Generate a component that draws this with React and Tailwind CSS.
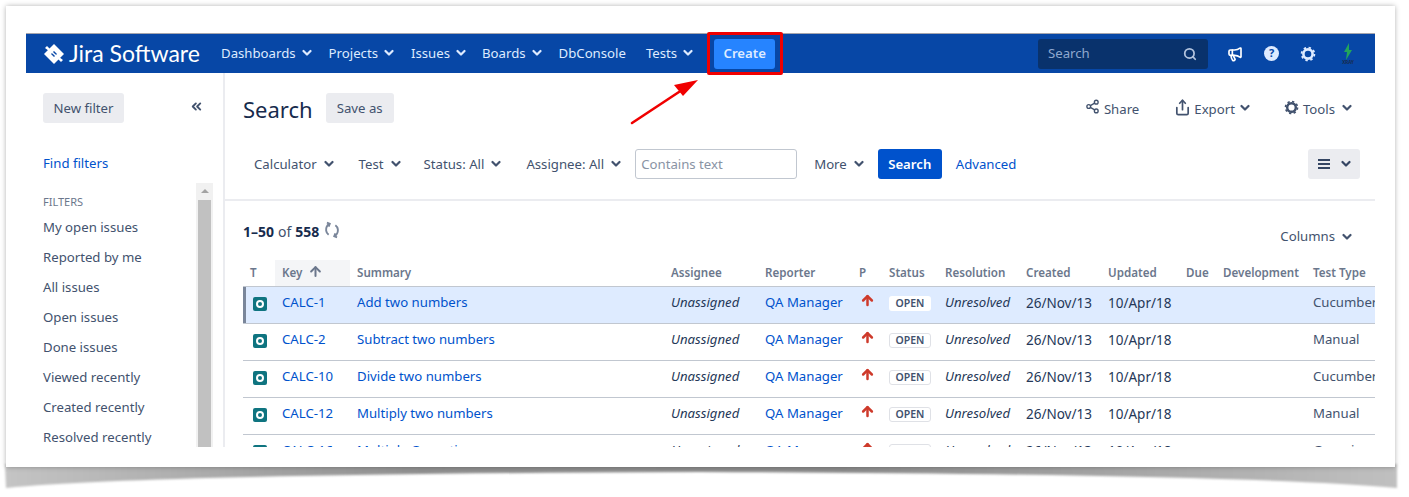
import { Search, Megaphone, Share2, Share, ArrowUp, ChevronsLeft } from 'lucide-react'

const font = { fontFamily: '"Noto Sans", sans-serif' }

const rowGrid = 'grid grid-cols-[32px_75px_314px_94px_94px_30px_56px_81px_82px_78px_37px_90px_69px]'

const issues = [
  { key: 'CALC-1', summary: 'Add two numbers', type: 'Cucumber', selected: true },
  { key: 'CALC-2', summary: 'Subtract two numbers', type: 'Manual' },
  { key: 'CALC-10', summary: 'Divide two numbers', type: 'Cucumber' },
  { key: 'CALC-12', summary: 'Multiply two numbers', type: 'Manual' },
  { key: 'CALC-16', summary: 'Multiple Operations', type: 'Generic' },
]

const filters = ['My open issues', 'Reported by me', 'All issues', 'Open issues', 'Done issues', 'Viewed recently', 'Created recently', 'Resolved recently', 'Updated recently']

const headers = ['T', 'Key', 'Summary', 'Assignee', 'Reporter', 'P', 'Status', 'Resolution', 'Created', 'Updated', 'Due', 'Development', 'Test Type']

function Chevron({ className = 'text-[#42526e]' }) {
  return (
    <svg className={`h-[8px] w-[10px] shrink-0 ${className}`} viewBox="0 0 10 8" fill="none" stroke="currentColor" strokeWidth="2.2" strokeLinecap="round" strokeLinejoin="round">
      <path d="M1.5 2l3.5 3.5L8.5 2" />
    </svg>
  )
}

function NavItem({ label, className = '', chevron = true }) {
  return (
    <div className={`flex items-center gap-[6px] whitespace-nowrap text-[#deebff] ${className}`}>
      <span>{label}</span>
      {chevron && <Chevron className="text-[#deebff]" />}
    </div>
  )
}

function FilterItem({ label, className = '' }) {
  return (
    <div className={`flex items-center gap-[7px] whitespace-nowrap text-[#42526e] ${className}`}>
      <span className="pt-[2px]">{label}</span>
      <Chevron />
    </div>
  )
}

function Gear({ className }) {
  return (
    <svg className={className} viewBox="0 0 16 16" fill="none" stroke="currentColor">
      <circle cx="8" cy="8" r="4.6" strokeWidth="2.6" />
      <circle cx="8" cy="8" r="6.4" strokeWidth="1.8" strokeDasharray="2.4 2.6" />
    </svg>
  )
}

function IssueIcon() {
  return (
    <div className="mt-[2px] flex h-[14px] w-[14px] items-center justify-center rounded-[2px] bg-[#0f7480]">
      <div className="h-[8px] w-[8px] rounded-full border-2 border-white" />
    </div>
  )
}

function IssueRow({ issue }) {
  const cell = 'pl-[7px] pt-[6px] whitespace-nowrap overflow-hidden'
  return (
    <div className={`${rowGrid} h-[37px] border-b border-[#c1c7d0] text-[13.2px] ${issue.selected ? 'bg-[#deebff]' : ''}`}>
      <div className={`pl-[10px] pt-[8px] ${issue.selected ? 'border-l-[3px] border-[#7a869a] !pl-[7px]' : ''}`}><IssueIcon /></div>
      <div className={`${cell} text-[#0052cc]`}>{issue.key}</div>
      <div className={`${cell} text-[#0052cc]`}>{issue.summary}</div>
      <div className={`${cell} italic text-[#253858]`}>Unassigned</div>
      <div className={`${cell} text-[#0052cc]`}>QA Manager</div>
      <div className="pl-[8px] pt-[6px]">
        <ArrowUp className="h-[15px] w-[15px] text-[#ce3a2b]" strokeWidth={4} />
      </div>
      <div className="pl-[7px] pt-[9px]">
        <div className={`flex h-[15px] w-[42px] items-center justify-center rounded-[3px] text-[10.5px] font-semibold text-[#42526e] ${issue.selected ? 'bg-white' : 'border border-[#dfe1e6]'}`}>OPEN</div>
      </div>
      <div className={`${cell} italic text-[#253858]`}>Unresolved</div>
      <div className={`${cell} text-[13.5px] text-[#253858]`}>26/Nov/13</div>
      <div className={`${cell} text-[13.5px] text-[#253858]`}>10/Apr/18</div>
      <div />
      <div />
      <div className={`${cell} text-[#42526e]`}>{issue.type}</div>
    </div>
  )
}

export default function App() {
  return (
    <div className="relative h-[497px] w-[1409px] overflow-hidden bg-white pl-[6px] pt-[6px] text-[13.2px]" style={font}>
      {/* Paper shadow under the card */}
      <svg className="absolute left-0 top-0 h-[497px] w-[1409px]" viewBox="0 0 1409 497">
        <defs>
          <linearGradient id="paper" x1="0" x2="1" y1="0" y2="0">
            <stop offset="0" stopColor="#c4c4c4" />
            <stop offset="0.3" stopColor="#909090" />
            <stop offset="0.6" stopColor="#8c8c8c" />
            <stop offset="1" stopColor="#c0c0c0" />
          </linearGradient>
          <filter id="soft"><feGaussianBlur stdDeviation="1.2" /></filter>
        </defs>
        <path d="M5 464H1397V488Q1250 474 700 472Q150 474 6 488Z" fill="url(#paper)" filter="url(#soft)" />
      </svg>

      {/* Card */}
      <div className="relative h-[461px] w-[1389px] bg-white px-[20px] pt-[27px] shadow-[0_0_5px_rgba(0,0,0,0.3)]">
        <div className="h-[414px] w-[1349px] overflow-hidden">
          {/* Header */}
          <div className="flex h-[40px] items-center border-t border-[#a5a5ad] bg-[#0747a6] pl-[18px] pr-[18px]">
            <svg className="h-[20px] w-[20px]" viewBox="0 0 20 20">
              <path d="M10 0l10 10-10 10L0 10z" fill="#fff" />
              <path d="M10 7l3 3-3 3-3-3z" fill="#0747a6" />
              <path d="M3 2l8 8-2 0-8-6zM17 18l-8-8 2 0 8 6z" fill="#fff" />
            </svg>
            <span className="ml-[5px] w-[152px] whitespace-nowrap text-[23px] text-white" style={{ fontFamily: 'Lato, sans-serif' }}>Jira Software</span>
            <NavItem label="Dashboards" />
            <NavItem label="Projects" className="ml-[17px]" />
            <NavItem label="Issues" className="ml-[17px]" />
            <NavItem label="Boards" className="ml-[16px]" />
            <NavItem label="DbConsole" chevron={false} className="ml-[17px]" />
            <NavItem label="Tests" className="ml-[20px]" />
            <button className="ml-[21px] h-[30px] w-[61px] rounded-[3px] bg-[#2684ff] font-semibold text-[#deebff]">Create</button>
            <div className="ml-auto flex h-[30px] w-[170px] items-center justify-between rounded-[3px] bg-[#09326c] pl-[10px] pr-[11px] text-[#8fa8cf]">
              <span>Search</span>
              <Search className="h-[14px] w-[14px] text-[#b3c4de]" strokeWidth={3} />
            </div>
            <Megaphone className="ml-[19px] h-[16px] w-[16px] text-white" strokeWidth={2.5} />
            <div className="ml-[21px] flex h-[15px] w-[15px] items-center justify-center rounded-full bg-[#deebff] text-[11px] font-bold text-[#0747a6]">?</div>
            <Gear className="ml-[21px] h-[16px] w-[16px] text-[#deebff]" />
            <div className="ml-[23px] flex w-[18px] flex-col items-center">
              <svg className="h-[17px] w-[10px]" viewBox="0 0 10 17"><path d="M6 0L1 9h3l-1 8 6-10H6z" fill="#22a55b" /></svg>
              <span className="text-[4.5px] font-bold leading-[5px] text-[#172b4d]">XRAY</span>
            </div>
          </div>

          <div className="flex h-[374px]">
            {/* Sidebar */}
            <div className="flex w-[199px] shrink-0 flex-col border-r-2 border-[#ebecf0]">
              <div className="flex items-center pl-[17px] pr-[19px] pt-[20px]">
                <button className="h-[30px] w-[81px] rounded-[3px] bg-[#ebecf0] pt-[1px] text-[#42526e]">New filter</button>
                <ChevronsLeft className="-mt-[3px] ml-auto h-[15px] w-[15px] text-[#42526e]" strokeWidth={3} />
              </div>
              <div className="mt-[31px] pl-[17px] text-[#0052cc]">Find filters</div>
              <div className="mt-[9px] flex min-h-0 flex-1 overflow-hidden pl-[17px]">
                <div className="w-[153px] pt-[11px]">
                  <div className="h-[19px] text-[11px] leading-[15px] text-[#6b778c]">FILTERS</div>
                  {filters.map((name) => (
                    <div key={name} className="flex h-[30px] items-center whitespace-nowrap text-[#42526e]">{name}</div>
                  ))}
                </div>
                <div className="flex w-[17px] flex-col items-center bg-[#f1f1f1]">
                  <div className="flex h-[17px] items-center">
                    <div className="h-0 w-0 border-x-[4px] border-b-[4px] border-x-transparent border-b-[#a3a3a3]" />
                  </div>
                  <div className="w-[13px] flex-1 bg-[#c1c1c1]" />
                </div>
              </div>
            </div>

            {/* Main */}
            <div className="min-w-0 flex-1">
              <div className="flex h-[128px] flex-col border-b-2 border-[#ebecf0]">
                <div className="flex items-center pl-[18px] pt-[20px]">
                  <h1 className="h-[30px] text-[22px] leading-[32px] text-[#172b4d]">Search</h1>
                  <button className="ml-[13px] h-[30px] w-[68px] rounded-[3px] bg-[#ebecf0] pt-[1px] text-[#42526e]">Save as</button>
                  <div className="ml-auto flex items-center pr-[23px] text-[#42526e]">
                    <Share2 className="-mt-[2px] h-[15px] w-[15px]" strokeWidth={2.2} />
                    <span className="ml-[4px] pt-[3px]">Share</span>
                    <Share className="-mt-[1px] ml-[35px] h-[17px] w-[17px]" strokeWidth={2.4} />
                    <span className="ml-[3px] pt-[3px]">Export</span>
                    <Chevron className="ml-[5px] text-[#42526e]" />
                    <Gear className="-mt-[1px] ml-[34px] h-[15px] w-[15px] text-[#42526e]" />
                    <span className="ml-[4px] pt-[3px]">Tools</span>
                    <Chevron className="ml-[7px] text-[#42526e]" />
                  </div>
                </div>
                <div className="mt-[26px] flex items-center pl-[29px] pr-[15px]">
                  <FilterItem label="Calculator" />
                  <FilterItem label="Test" className="ml-[25px]" />
                  <FilterItem label="Status: All" className="ml-[23px]" />
                  <FilterItem label="Assignee: All" className="ml-[25px]" />
                  <div className="ml-[14px] flex h-[30px] w-[162px] items-center rounded-[3px] border border-[#c1c7d0] pl-[5px] pt-[2px] text-[#8993a4]">Contains text</div>
                  <FilterItem label="More" className="ml-[17px]" />
                  <button className="ml-[14px] h-[30px] w-[64px] rounded-[3px] bg-[#0052cc] pt-[1px] font-semibold text-white">Search</button>
                  <span className="ml-[14px] pt-[2px] text-[#0052cc]">Advanced</span>
                  <div className="ml-auto flex h-[30px] w-[52px] items-center justify-center gap-[11px] rounded-[3px] bg-[#ebecf0] text-[#344563]">
                    <div className="flex h-[10px] w-[12px] flex-col justify-between">
                      <div className="h-[2px] bg-[#344563]" />
                      <div className="h-[2px] bg-[#344563]" />
                      <div className="h-[2px] bg-[#344563]" />
                    </div>
                    <Chevron className="text-[#344563]" />
                  </div>
                </div>
              </div>

              <div className="pl-[18px]">
                <div className="flex h-[59px]">
                  <div className="flex items-center pt-[2px] text-[14px] text-[#172b4d]">
                    <b className="font-bold">1–50</b>
                    <span className="mx-[4px] text-[#42526e]">of</span>
                    <b className="font-bold">558</b>
                    <svg className="-mt-[3px] ml-[4px] h-[18px] w-[18px] text-[#7a869a]" viewBox="0 0 16 16" fill="none" stroke="currentColor" strokeWidth="1.7">
                      <path d="M5.5 2.5C3.5 4 2.5 6 2.8 8.5c.2 1.6 1 2.8 2.2 3.7" />
                      <path d="M3.5 1.5l2.5 1-1 2.5" />
                      <path d="M10.5 13.5c2-1.5 3-3.5 2.7-6-.2-1.6-1-2.8-2.2-3.7" />
                      <path d="M12.5 14.5l-2.5-1 1-2.5" />
                    </svg>
                  </div>
                  <div className="ml-auto flex items-center gap-[7px] pr-[23px] pt-[12px] text-[#42526e]">
                    <span>Columns</span>
                    <Chevron />
                  </div>
                </div>
                {/* Table */}
                <div className={`${rowGrid} h-[27px] border-b border-[#c1c7d0] text-[11.6px] font-semibold text-[#6b778c]`}>
                  {headers.map((h) => (
                    <div key={h} className={`flex items-center whitespace-nowrap pl-[7px] ${h === 'Key' ? 'gap-[6px] bg-[#f4f5f7]' : ''}`}>
                      {h}
                      {h === 'Key' && <ArrowUp className="-mt-[4px] h-[15px] w-[15px]" strokeWidth={3.2} />}
                    </div>
                  ))}
                </div>
                {issues.map((issue) => (
                  <IssueRow key={issue.key} issue={issue} />
                ))}
              </div>
            </div>
          </div>
        </div>
      </div>

      {/* Red annotation */}
      <div className="absolute left-[707px] top-[32px] h-[43px] w-[76px] rounded-[2px] border-[3px] border-[#f00000]" />
      <svg className="absolute left-[625px] top-[75px] h-[55px] w-[80px]" viewBox="0 0 80 55">
        <path d="M7 48L60 13" stroke="#f00000" strokeWidth="2.6" strokeLinecap="round" />
        <path d="M73 5L49 10l9 11z" fill="#f00000" />
      </svg>
    </div>
  )
}
